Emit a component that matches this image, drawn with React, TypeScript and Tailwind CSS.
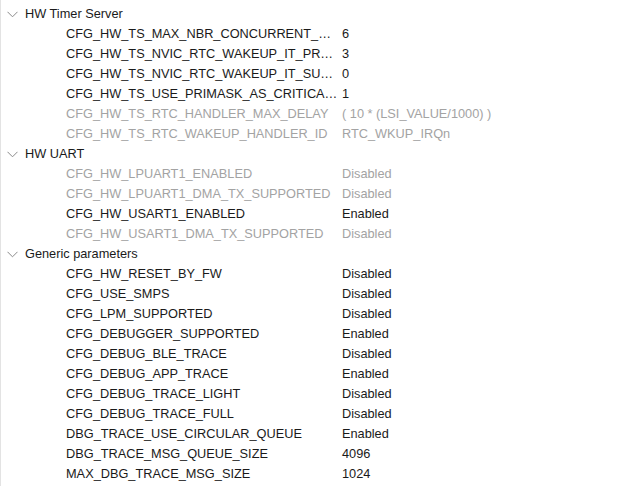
import React from "react";

type Row = { name: string; value: string; disabled?: boolean };
type Group = { title: string; rows: Row[] };

const groups: Group[] = [
  {
    title: "HW Timer Server",
    rows: [
      { name: "CFG_HW_TS_MAX_NBR_CONCURRENT_TIMER", value: "6" },
      { name: "CFG_HW_TS_NVIC_RTC_WAKEUP_IT_PREEMPTPRIO", value: "3" },
      { name: "CFG_HW_TS_NVIC_RTC_WAKEUP_IT_SUBPRIO", value: "0" },
      { name: "CFG_HW_TS_USE_PRIMASK_AS_CRITICAL_SECTION", value: "1" },
      { name: "CFG_HW_TS_RTC_HANDLER_MAX_DELAY", value: "( 10 * (LSI_VALUE/1000) )", disabled: true },
      { name: "CFG_HW_TS_RTC_WAKEUP_HANDLER_ID", value: "RTC_WKUP_IRQn", disabled: true },
    ],
  },
  {
    title: "HW UART",
    rows: [
      { name: "CFG_HW_LPUART1_ENABLED", value: "Disabled", disabled: true },
      { name: "CFG_HW_LPUART1_DMA_TX_SUPPORTED", value: "Disabled", disabled: true },
      { name: "CFG_HW_USART1_ENABLED", value: "Enabled" },
      { name: "CFG_HW_USART1_DMA_TX_SUPPORTED", value: "Disabled", disabled: true },
    ],
  },
  {
    title: "Generic parameters",
    rows: [
      { name: "CFG_HW_RESET_BY_FW", value: "Disabled" },
      { name: "CFG_USE_SMPS", value: "Disabled" },
      { name: "CFG_LPM_SUPPORTED", value: "Disabled" },
      { name: "CFG_DEBUGGER_SUPPORTED", value: "Enabled" },
      { name: "CFG_DEBUG_BLE_TRACE", value: "Disabled" },
      { name: "CFG_DEBUG_APP_TRACE", value: "Enabled" },
      { name: "CFG_DEBUG_TRACE_LIGHT", value: "Disabled" },
      { name: "CFG_DEBUG_TRACE_FULL", value: "Disabled" },
      { name: "DBG_TRACE_USE_CIRCULAR_QUEUE", value: "Enabled" },
      { name: "DBG_TRACE_MSG_QUEUE_SIZE", value: "4096" },
      { name: "MAX_DBG_TRACE_MSG_SIZE", value: "1024" },
    ],
  },
];

function Chevron() {
  return (
    <svg width="11" height="7" viewBox="0 0 11 7" className="shrink-0">
      <path d="M0.5 0.8 L5.5 5.8 L10.5 0.8" fill="none" stroke="#8a8a8a" strokeWidth="1" />
    </svg>
  );
}

export default function App() {
  return (
    <div
      className="w-[622px] h-[486px] bg-white border-l border-[#e3e3e3] overflow-hidden pt-[4px] text-[12.75px] leading-[20px]"
      style={{ fontFamily: '"Liberation Sans", Arial, sans-serif' }}
    >
      {groups.map((g) => (
        <div key={g.title}>
          <div className="flex items-center h-[20px] pl-[6px] gap-[7px] text-[#1a1a1a]">
            <Chevron />
            <span>{g.title}</span>
          </div>
          {g.rows.map((r) => (
            <div
              key={r.name}
              className={`flex items-center h-[20px] ${r.disabled ? "text-[#a3a3a3]" : "text-[#1a1a1a]"}`}
            >
              <div className="w-[341px] pl-[65px] pr-[4px] truncate shrink-0" title={r.name}>
                {r.name}
              </div>
              <div className="whitespace-nowrap">{r.value}</div>
            </div>
          ))}
        </div>
      ))}
    </div>
  );
}
